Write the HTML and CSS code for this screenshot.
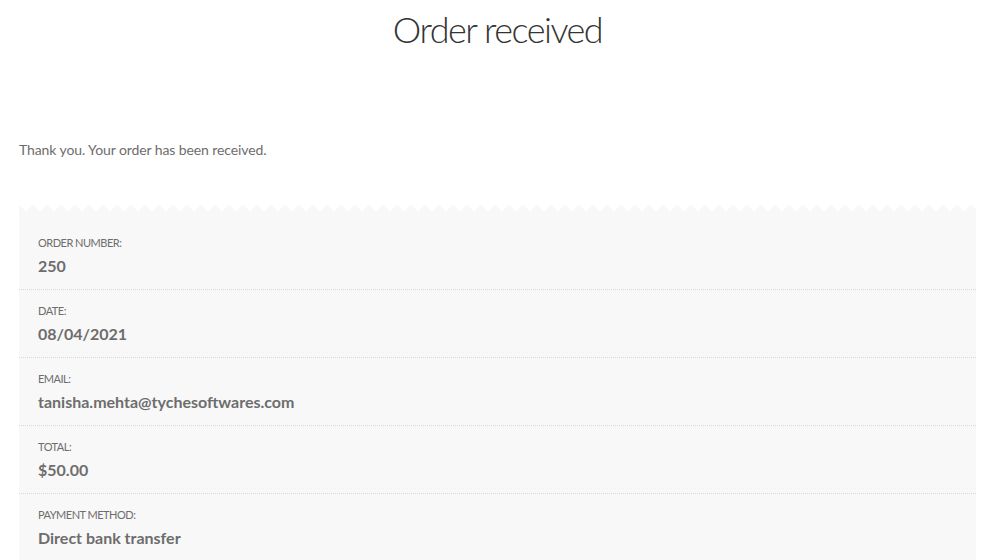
FILE: index.html
```html
<!DOCTYPE html>
<html lang="en">
<head>
    <meta charset="UTF-8">
    <meta name="viewport" content="width=device-width, initial-scale=1.0">
    <title>Order received</title>
    <link rel="stylesheet" href="styles.css">
</head>
<body>
    <div class="container">
        <h1 class="page-title">Order received</h1>

        <p class="thankyou">Thank you. Your order has been received.</p>

        <div class="receipt">
            <ul class="order-details">
                <li>
                    <span class="label">Order number:</span>
                    <strong>250</strong>
                </li>
                <li>
                    <span class="label">Date:</span>
                    <strong>08/04/2021</strong>
                </li>
                <li>
                    <span class="label">Email:</span>
                    <strong>tanisha.mehta@tychesoftwares.com</strong>
                </li>
                <li>
                    <span class="label">Total:</span>
                    <strong>$50.00</strong>
                </li>
                <li>
                    <span class="label">Payment method:</span>
                    <strong>Direct bank transfer</strong>
                </li>
            </ul>
        </div>
    </div>
</body>
</html>
```

FILE: styles.css
```css
body {
    font-family: Lato, "Open Sans", sans-serif;
    margin: 0;
    padding: 0;
    background-color: #fff;
    color: #6d6d6d;
}
.container {
    margin-left: 19px;
    width: 957px;
}
.page-title {
    margin: 4px 0 0;
    font-size: 36px;
    font-weight: 300;
    line-height: 50px;
    letter-spacing: -1.5px;
    color: #333;
    text-align: center;
}
.thankyou {
    margin: 85px 0 0;
    font-size: 14px;
    line-height: 22px;
    letter-spacing: -0.1px;
}
.receipt {
    margin-top: 43px;
}
/* torn paper edge */
.receipt::before {
    content: "";
    display: block;
    height: 7px;
    background:
        linear-gradient(-45deg, #f8f8f8 25%, transparent 25%),
        linear-gradient(45deg, #f8f8f8 25%, transparent 25%);
    background-size: 14px 14px;
    background-position: left bottom;
    background-repeat: repeat-x;
}
.order-details {
    list-style: none;
    margin: 0;
    padding: 11px 0 0;
    background-color: #f8f8f8;
}
.order-details li {
    padding: 13px 19px 12px;
    border-bottom: 1px dotted rgba(0, 0, 0, 0.12);
}
.order-details .label {
    display: block;
    font-size: 11px;
    line-height: 16px;
    letter-spacing: -0.5px;
    text-transform: uppercase;
}
.order-details strong {
    display: block;
    margin-top: 4px;
    font-size: 16px;
    line-height: 22px;
    font-weight: 700;
}
```
